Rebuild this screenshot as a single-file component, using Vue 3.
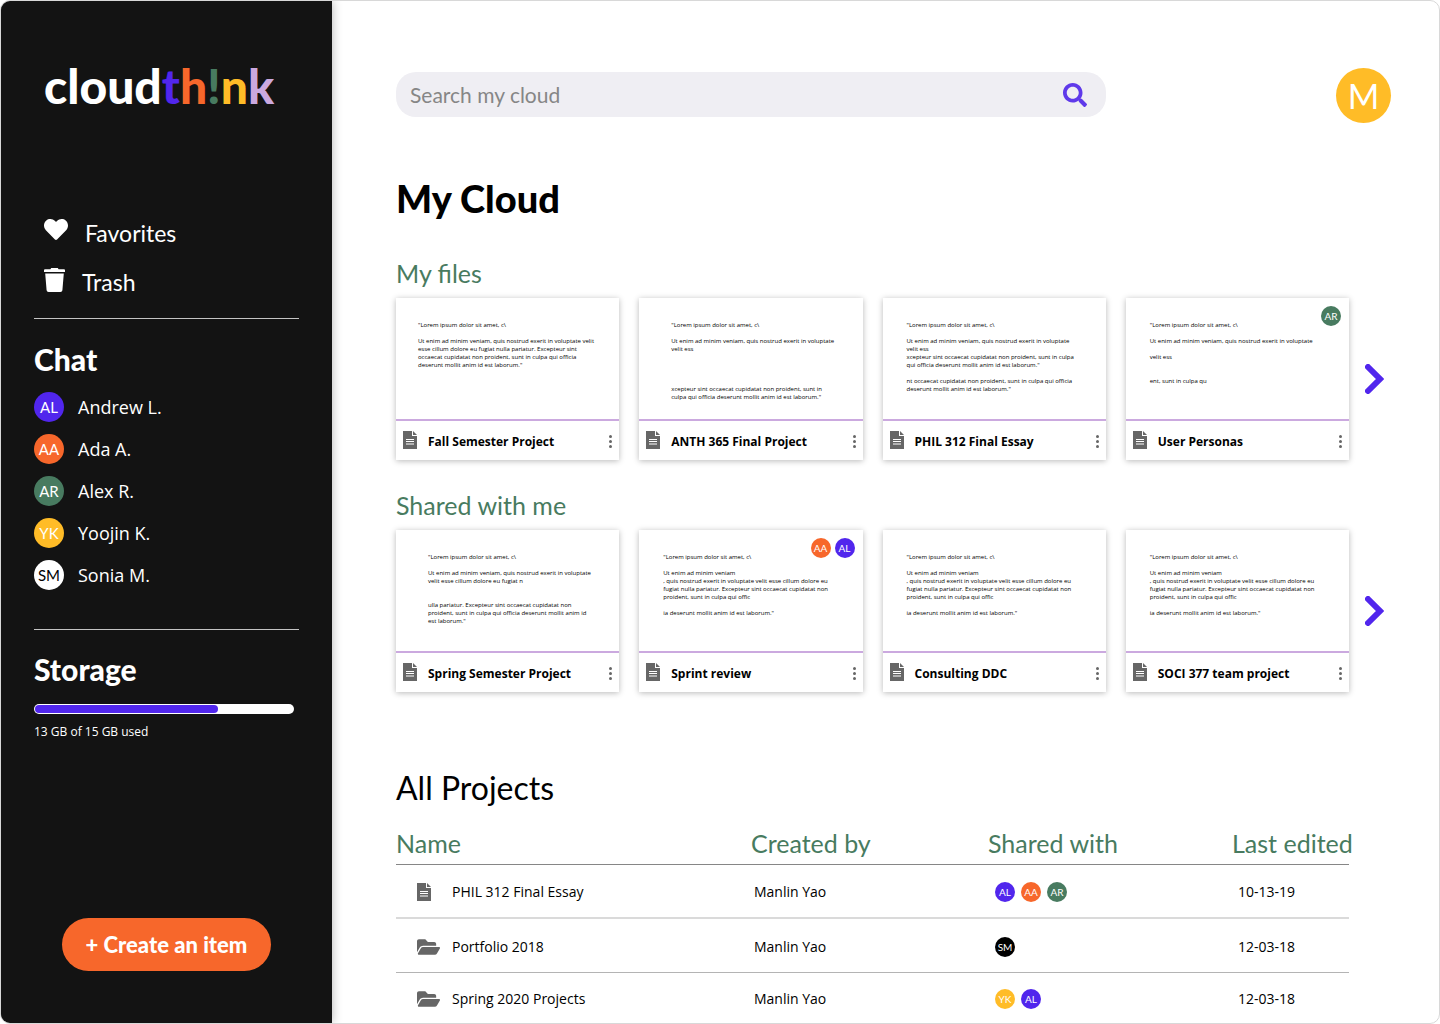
<script setup>
import { ref } from 'vue'

const people = [
  { initials: 'AL', name: 'Andrew L.', tone: 'violet' },
  { initials: 'AA', name: 'Ada A.', tone: 'orange' },
  { initials: 'AR', name: 'Alex R.', tone: 'green' },
  { initials: 'YK', name: 'Yoojin K.', tone: 'yellow' },
  { initials: 'SM', name: 'Sonia M.', tone: 'white' },
]

const logo = [
  { text: 'cloud', tone: 'ink-white' },
  { text: 't', tone: 'ink-violet' },
  { text: 'h', tone: 'ink-orange' },
  { text: '!', tone: 'ink-green' },
  { text: 'n', tone: 'ink-yellow' },
  { text: 'k', tone: 'ink-lilac' },
]

const AL = { initials: 'AL', tone: 'violet' }
const AA = { initials: 'AA', tone: 'orange' }
const AR = { initials: 'AR', tone: 'green' }
const YK = { initials: 'YK', tone: 'yellow' }
const SM = { initials: 'SM', tone: 'black' }

const sharedDraft = `"Lorem ipsum dolor sit amet, c\\

Ut enim ad minim veniam
, quis nostrud exerit in voluptate velit esse cillum dolore eu
fugiat nulla pariatur. Excepteur sint occaecat cupidatat non
proident, sunt in culpa qui offic

ia deserunt mollit anim id est laborum."`

const shelves = [
  {
    title: 'My files',
    files: [
      {
        title: 'Fall Semester Project',
        indent: 22,
        badges: [],
        text: `"Lorem ipsum dolor sit amet, c\\

Ut enim ad minim veniam, quis nostrud exerit in voluptate velit
esse cillum dolore eu fugiat nulla pariatur. Excepteur sint
occaecat cupidatat non proident, sunt in culpa qui officia
deserunt mollit anim id est laborum."`,
      },
      {
        title: 'ANTH 365 Final Project',
        indent: 32,
        badges: [],
        text: `"Lorem ipsum dolor sit amet, c\\

Ut enim ad minim veniam, quis nostrud exerit in voluptate
velit ess




xcepteur sint occaecat cupidatat non proident, sunt in
culpa qui officia deserunt mollit anim id est laborum."`,
      },
      {
        title: 'PHIL 312 Final Essay',
        indent: 24,
        badges: [],
        text: `"Lorem ipsum dolor sit amet, c\\

Ut enim ad minim veniam, quis nostrud exerit in voluptate
velit ess
xcepteur sint occaecat cupidatat non proident, sunt in culpa
qui officia deserunt mollit anim id est laborum."

nt occaecat cupidatat non proident, sunt in culpa qui officia
deserunt mollit anim id est laborum."`,
      },
      {
        title: 'User Personas',
        indent: 24,
        badges: [AR],
        text: `"Lorem ipsum dolor sit amet, c\\

Ut enim ad minim veniam, quis nostrud exerit in voluptate

velit ess


ent, sunt in culpa qu`,
      },
    ],
  },
  {
    title: 'Shared with me',
    files: [
      {
        title: 'Spring Semester Project',
        indent: 32,
        badges: [],
        text: `"Lorem ipsum dolor sit amet, c\\

Ut enim ad minim veniam, quis nostrud exerit in voluptate
velit esse cillum dolore eu fugiat n


ulla pariatur. Excepteur sint occaecat cupidatat non
proident, sunt in culpa qui officia deserunt mollit anim id
est laborum."`,
      },
      { title: 'Sprint review', indent: 24, badges: [AA, AL], text: sharedDraft },
      { title: 'Consulting DDC', indent: 24, badges: [], text: sharedDraft },
      { title: 'SOCI 377 team project', indent: 24, badges: [], text: sharedDraft },
    ],
  },
]

const projects = [
  { kind: 'file', name: 'PHIL 312 Final Essay', owner: 'Manlin Yao', shared: [AL, AA, AR], edited: '10-13-19' },
  { kind: 'folder', name: 'Portfolio 2018', owner: 'Manlin Yao', shared: [SM], edited: '12-03-18' },
  { kind: 'folder', name: 'Spring 2020 Projects', owner: 'Manlin Yao', shared: [YK, AL], edited: '12-03-18' },
]

const query = ref('')
const storageFill = 71
</script>

<template>
  <div class="app">
    <aside class="sidebar">
      <a class="logo" href="#" aria-label="cloudth!nk"><span v-for="part in logo" :key="part.text" :class="part.tone">{{ part.text }}</span></a>

      <nav class="nav">
        <a class="nav-link" href="#favorites">
          <svg class="nav-icon" width="24" height="21" viewBox="0 32 512 448" aria-hidden="true">
            <path fill="currentColor" d="M462.3 62.6C407.5 15.9 326 24.3 275.7 76.2L256 96.5l-19.7-20.3C186.1 24.3 104.5 15.9 49.7 62.6c-62.8 53.6-66.1 149.8-9.9 207.9l193.5 199.8c12.5 12.9 32.8 12.9 45.3 0l193.5-199.8c56.3-58.1 53-154.3-9.8-207.9z" />
          </svg>
          Favorites
        </a>
        <a class="nav-link" href="#trash">
          <svg class="nav-icon" width="21" height="24" viewBox="0 0 21 24" aria-hidden="true">
            <path fill="currentColor" d="M7.2 0h6.6l.8 1.2H20a1 1 0 0 1 1 1V4H0V2.200a1 1 0 0 1 1-1h5.400zM1.200 5.500h18.600L18.400 22.200a2 2 0 0 1-2 1.800H4.600a2 2 0 0 1-2-1.800z" />
          </svg>
          Trash
        </a>
      </nav>

      <section class="chat">
        <h2 class="side-title">Chat</h2>
        <ul class="people">
          <li v-for="person in people" :key="person.initials">
            <a class="person" href="#chat">
              <span class="avatar avatar-medium" :class="person.tone">{{ person.initials }}</span>
              {{ person.name }}
            </a>
          </li>
        </ul>
      </section>

      <section class="storage">
        <h2 class="side-title">Storage</h2>
        <div class="meter">
          <div class="meter-fill" :style="{ width: storageFill + '%' }"></div>
        </div>
        <p class="storage-note">13 GB of 15 GB used</p>
      </section>

      <button class="create" type="button">+ Create an item</button>
    </aside>

    <main class="main">
      <header class="topbar">
        <form class="search" role="search" @submit.prevent>
          <input v-model="query" class="search-input" type="search" placeholder="Search my cloud" aria-label="Search my cloud" />
          <button class="search-button" type="submit" aria-label="Search">
            <svg width="24" height="24" viewBox="0 0 512 512" aria-hidden="true">
              <path fill="currentColor" d="M505 442.700L405.300 343c-4.500-4.500-10.600-7-17-7H372c27.600-35.300 44-79.700 44-128C416 93.100 322.900 0 208 0S0 93.100 0 208s93.100 208 208 208c48.300 0 92.700-16.400 128-44v16.300c0 6.400 2.500 12.500 7 17l99.700 99.700c9.400 9.400 24.600 9.400 33.900 0l28.300-28.300c9.400-9.400 9.400-24.600.1-34zM208 336c-70.700 0-128-57.200-128-128 0-70.700 57.200-128 128-128 70.700 0 128 57.200 128 128 0 70.700-57.200 128-128 128z" />
            </svg>
          </button>
        </form>
        <button class="avatar avatar-large yellow" type="button" aria-label="Account">M</button>
      </header>

      <h1 class="page-title">My Cloud</h1>

      <section v-for="shelf in shelves" :key="shelf.title" class="shelf">
        <h2 class="section-title">{{ shelf.title }}</h2>
        <div class="shelf-row">
          <div class="cards">
            <article v-for="file in shelf.files" :key="file.title" class="card">
              <div class="preview" :style="{ paddingLeft: file.indent + 'px' }">
                <p class="preview-text">{{ file.text }}</p>
                <div v-if="file.badges.length" class="badges">
                  <span v-for="badge in file.badges" :key="badge.initials" class="avatar avatar-small" :class="badge.tone">{{ badge.initials }}</span>
                </div>
              </div>
              <footer class="card-footer">
                <svg class="icon" width="14" height="18" viewBox="0 0 14 18" aria-hidden="true">
                  <path fill="currentColor" d="M0 0h9v5h5v13H0z M10 0l4 4h-4z" />
                  <path stroke="#fff" d="M3 8.500h8M3 10.500h8M3 13h8" />
                </svg>
                <h3 class="card-title">{{ file.title }}</h3>
                <button class="more" type="button" :aria-label="'More options for ' + file.title">
                  <svg width="3" height="13" viewBox="0 0 3 13" aria-hidden="true">
                    <g fill="currentColor">
                      <circle cx="1.500" cy="1.500" r="1.500" />
                      <circle cx="1.500" cy="6.500" r="1.500" />
                      <circle cx="1.500" cy="11.500" r="1.500" />
                    </g>
                  </svg>
                </button>
              </footer>
            </article>
          </div>
          <button class="next" type="button" :aria-label="'Next in ' + shelf.title">
            <svg width="19" height="30" viewBox="0 0 19 30" aria-hidden="true">
              <path fill="none" stroke="currentColor" stroke-width="6" stroke-linecap="round" d="M3 3l12 12L3 27" />
            </svg>
          </button>
        </div>
      </section>

      <section class="projects">
        <h2 class="projects-title">All Projects</h2>
        <table class="table">
          <thead>
            <tr>
              <th class="col-name" scope="col">Name</th>
              <th class="col-owner" scope="col">Created by</th>
              <th class="col-shared" scope="col">Shared with</th>
              <th class="col-edited" scope="col">Last edited</th>
            </tr>
          </thead>
          <tbody>
            <tr v-for="project in projects" :key="project.name">
              <td>
                <div class="project-name">
                  <span class="project-icon">
                    <svg v-if="project.kind === 'file'" class="icon" width="14" height="18" viewBox="0 0 14 18" aria-hidden="true">
                      <path fill="currentColor" d="M0 0h9v5h5v13H0z M10 0l4 4h-4z" />
                      <path stroke="#fff" d="M3 8.500h8M3 10.500h8M3 13h8" />
                    </svg>
                    <svg v-else class="icon" width="23" height="16" viewBox="0 64 576 384" aria-hidden="true">
                      <path fill="currentColor" d="M572.694 292.093L500.270 416.248A63.997 63.997 0 0 1 444.989 448H45.025c-18.523 0-30.064-20.093-20.731-36.093l72.424-124.155A64 64 0 0 1 152 256h399.964c18.523 0 30.064 20.093 20.730 36.093zM152 224h328v-48c0-26.510-21.490-48-48-48H272l-64-64H48C21.490 64 0 85.490 0 112v278.046l69.077-118.418C86.214 242.250 117.989 224 152 224z" />
                    </svg>
                  </span>
                  {{ project.name }}
                </div>
              </td>
              <td class="cell-owner">{{ project.owner }}</td>
              <td class="cell-shared">
                <div class="shared">
                  <span v-for="badge in project.shared" :key="badge.initials" class="avatar avatar-small" :class="badge.tone">{{ badge.initials }}</span>
                </div>
              </td>
              <td class="cell-edited">{{ project.edited }}</td>
            </tr>
          </tbody>
        </table>
      </section>
    </main>
  </div>
</template>

<style>
body {
  background: #fff;
}
</style>

<style scoped>
.app {
  --violet: #5126ed;
  --orange: #f7672b;
  --green: #487b60;
  --yellow: #ffbc27;
  --lilac: #cba9df;
  --display: "Futura PT", Futura, Lato, sans-serif;
  --body: "Open Sans", "Noto Sans", sans-serif;
  box-sizing: border-box;
  display: grid;
  grid-template-columns: 331px minmax(0, 1fr);
  min-height: 100vh;
  border: 1px solid #d8d8d8;
  border-radius: 10px;
  overflow: hidden;
  font-family: var(--body);
  color: #000;
}

.app *,
.app *::before {
  box-sizing: border-box;
}

h1,
h2,
h3,
p,
ul {
  margin: 0;
  padding: 0;
}

a {
  color: inherit;
  text-decoration: none;
}

button {
  border: 0;
  padding: 0;
  background: none;
  font: inherit;
  color: inherit;
  cursor: pointer;
}

svg {
  display: block;
  flex: none;
}

/* Sidebar */
.sidebar {
  display: flex;
  flex-direction: column;
  padding: 57px 33px 52px;
  background: #131313;
  color: #fff;
  box-shadow: 0 0 10px rgba(0, 0, 0, 0.3);
}

.logo {
  padding-left: 10px;
  font-family: var(--display);
  font-size: 48px;
  font-weight: 900;
  line-height: 56px;
  white-space: nowrap;
}

.ink-white { color: #fff; }
.ink-violet { color: var(--violet); }
.ink-orange { color: var(--orange); }
.ink-green { color: var(--green); }
.ink-yellow { color: var(--yellow); }
.ink-lilac { color: var(--lilac); }

.nav {
  display: flex;
  flex-direction: column;
  gap: 17px;
  margin-top: 103px;
  padding: 0 0 20px 10px;
  border-bottom: 1px solid #c4c4c4;
}

.nav-link {
  display: flex;
  align-items: flex-start;
  gap: 17px;
  font-family: var(--display);
  font-size: 23px;
  line-height: 32px;
}

.nav-icon {
  margin-top: 2px;
}

.chat {
  padding: 24px 0 39px;
  border-bottom: 1px solid #c4c4c4;
}

.side-title {
  font-family: var(--display);
  font-size: 30px;
  font-weight: 900;
  line-height: 32px;
}

.people {
  display: flex;
  flex-direction: column;
  gap: 12px;
  margin-top: 17px;
  list-style: none;
}

.person {
  display: flex;
  align-items: center;
  gap: 14px;
  font-size: 18px;
  line-height: 30px;
}

.storage {
  padding-top: 23px;
}

.meter {
  width: 98%;
  height: 10px;
  margin-top: 19px;
  padding: 1px;
  border-radius: 5px;
  background: #fff;
}

.meter-fill {
  height: 8px;
  border-radius: 4px;
  background: var(--violet);
}

.storage-note {
  margin-top: 9px;
  font-size: 12px;
  line-height: 18px;
}

.create {
  align-self: center;
  margin-top: auto;
  padding: 0 24px;
  border-radius: 27px;
  background: var(--orange);
  font-family: var(--display);
  font-size: 22px;
  font-weight: 900;
  line-height: 53px;
}

/* Avatars */
.avatar {
  display: flex;
  flex: none;
  align-items: center;
  justify-content: center;
  border-radius: 50%;
  font-family: var(--display);
  color: #fff;
}

.avatar-small {
  width: 20px;
  height: 20px;
  font-size: 10px;
  line-height: 20px;
}

.avatar-medium {
  width: 30px;
  height: 30px;
  font-size: 15px;
}

.avatar-large {
  width: 55px;
  height: 55px;
  font-size: 34px;
}

.violet { background: var(--violet); }
.orange { background: var(--orange); }
.green { background: var(--green); }
.yellow { background: var(--yellow); }
.black { background: #000; }
.white { background: #fff; color: #000; }

/* Main column */
.main {
  padding: 67px 48px 0 64px;
}

.topbar {
  display: flex;
  align-items: flex-start;
  gap: 230px;
}

.search {
  display: flex;
  flex: 1;
  align-items: center;
  min-width: 0;
  height: 45px;
  margin-top: 4px;
  padding: 0 19px 0 14px;
  border-radius: 20px;
  background: #efeef3;
}

.search-input {
  flex: 1;
  min-width: 0;
  padding: 0;
  border: 0;
  outline: 0;
  appearance: none;
  background: none;
  font-family: var(--display);
  font-size: 21px;
  line-height: 32px;
}

.search-input::placeholder {
  color: #868686;
  opacity: 1;
}

.search-button {
  color: #5f39ea;
}

.page-title {
  margin-top: 53px;
  font-family: var(--display);
  font-size: 38px;
  font-weight: 900;
  line-height: 44px;
}

.page-title + .shelf {
  margin-top: 37px;
}

.section-title {
  font-family: var(--display);
  font-size: 25px;
  font-weight: 400;
  line-height: 32px;
  color: var(--green);
}

.shelf-row {
  display: flex;
  align-items: center;
  margin-top: 9px;
}

.shelf + .shelf {
  margin-top: 29px;
}

.cards {
  display: grid;
  flex: 1;
  grid-template-columns: repeat(4, minmax(0, 1fr));
  gap: 20px;
}

.card {
  background: #fff;
  box-shadow: 0 1px 6px rgba(0, 0, 0, 0.28);
}

.preview {
  position: relative;
  height: 123px;
  padding-top: 23px;
  border-bottom: 2px solid var(--lilac);
  overflow: hidden;
}

.preview-text {
  font-size: 6px;
  line-height: 8px;
  white-space: pre;
}

.badges {
  position: absolute;
  top: 8px;
  right: 8px;
  display: flex;
  gap: 4px;
}

.card-footer {
  display: flex;
  align-items: center;
  height: 39px;
  padding: 2px 7px 0;
}

.icon {
  color: #666;
}

.card-footer .icon {
  margin-bottom: 4px;
}

.card-title {
  flex: 1;
  min-width: 0;
  margin-left: 11px;
  font-size: 12px;
  font-weight: 700;
  line-height: 18px;
  white-space: nowrap;
}

.more {
  color: #666;
}

.next {
  width: 42px;
  padding-left: 16px;
  color: var(--violet);
}

/* Projects table */
.projects {
  margin: 74px 42px 0 0;
}

.projects-title {
  font-family: var(--display);
  font-size: 32px;
  font-weight: 400;
  line-height: 44px;
}

.table {
  width: 100%;
  margin-top: 12px;
  border-collapse: collapse;
  table-layout: fixed;
}

.table th {
  height: 42px;
  padding: 0;
  border-bottom: 1px solid #868686;
  font-family: var(--display);
  font-size: 25px;
  font-weight: 400;
  line-height: 32px;
  text-align: left;
  white-space: nowrap;
  color: var(--green);
}

.col-owner { width: 237px; }
.col-shared { width: 244px; }
.col-edited { width: 117px; }

.table td {
  height: 54px;
  padding: 3px 0 0;
  border-bottom: 1px solid #b4b4b4;
  font-size: 14px;
  line-height: 20px;
}

.table tbody tr:first-child td {
  border-bottom: 2px solid #dadada;
}

.table tbody tr:last-child td {
  height: 50px;
  border-bottom: 0;
}

.project-name {
  display: flex;
  align-items: center;
  padding-left: 21px;
}

.project-icon {
  width: 35px;
}

.table .cell-owner { padding-left: 3px; }
.table .cell-shared { padding-left: 7px; }
.table .cell-edited { padding-left: 6px; }

.shared {
  display: flex;
  gap: 6px;
}
</style>
